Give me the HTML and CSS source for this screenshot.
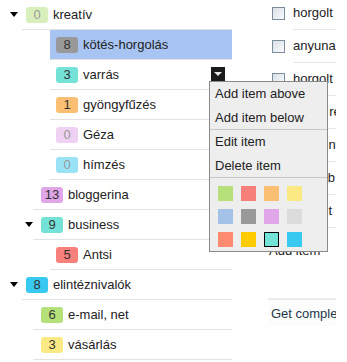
FILE: index.html
```html
<!DOCTYPE html>
<html>
<head>
<meta charset="utf-8">
<link rel="stylesheet" href="styles.css">
</head>
<body>
<div class="page">
  <div class="tree">
    <div class="row l0">
      <span class="gutter"><span class="caret"></span></span>
      <div class="body"><span class="badge green zero">0</span><span class="label">kreatív</span></div>
    </div>
    <div class="row l2">
      <span class="gutter"></span>
      <div class="body selected"><span class="badge gray">8</span><span class="label">kötés-horgolás</span></div>
    </div>
    <div class="row l2">
      <span class="gutter"></span>
      <div class="body"><span class="badge teal">3</span><span class="label">varrás</span><span class="menubtn"></span></div>
    </div>
    <div class="row l2">
      <span class="gutter"></span>
      <div class="body"><span class="badge orange">1</span><span class="label">gyöngyfűzés</span></div>
    </div>
    <div class="row l2">
      <span class="gutter"></span>
      <div class="body"><span class="badge lavender zero">0</span><span class="label">Géza</span></div>
    </div>
    <div class="row l2">
      <span class="gutter"></span>
      <div class="body"><span class="badge cyan zero">0</span><span class="label">hímzés</span></div>
    </div>
    <div class="row l1">
      <span class="gutter"></span>
      <div class="body"><span class="badge lavender">13</span><span class="label">bloggerina</span></div>
    </div>
    <div class="row l1">
      <span class="gutter"><span class="caret"></span></span>
      <div class="body"><span class="badge teal">9</span><span class="label">business</span></div>
    </div>
    <div class="row l2">
      <span class="gutter"></span>
      <div class="body"><span class="badge salmon">5</span><span class="label">Antsi</span></div>
    </div>
    <div class="row l0">
      <span class="gutter"><span class="caret"></span></span>
      <div class="body"><span class="badge cyan">8</span><span class="label">elintéznivalók</span></div>
    </div>
    <div class="row l1">
      <span class="gutter"></span>
      <div class="body"><span class="badge green">6</span><span class="label">e-mail, net</span></div>
    </div>
    <div class="row l1">
      <span class="gutter"></span>
      <div class="body"><span class="badge yellow">3</span><span class="label">vásárlás</span></div>
    </div>
  </div>

  <div class="tasks">
    <div class="task"><span class="check"></span><span class="task-text">horgolt</span></div>
    <div class="task"><span class="check"></span><span class="task-text">anyuna</span></div>
    <div class="task"><span class="check"></span><span class="task-text">horgolt</span></div>
    <div class="task"><span class="check"></span><span class="task-text">cérna rendelés</span></div>
    <div class="task"><span class="check"></span><span class="task-text">minta nyak</span></div>
    <div class="task"><span class="check"></span><span class="task-text">táska b</span></div>
    <div class="task"><span class="check"></span><span class="task-text">kabát t</span></div>
    <div class="add-item">Add item</div>
    <div class="get-complete">Get completed</div>
  </div>

  <div class="menu">
    <div class="menu-item">Add item above</div>
    <div class="menu-item">Add item below</div>
    <div class="menu-sep"></div>
    <div class="menu-item">Edit item</div>
    <div class="menu-item">Delete item</div>
    <div class="menu-sep"></div>
    <div class="swatches">
      <span class="sw green"></span><span class="sw salmon"></span><span class="sw orange"></span><span class="sw yellow"></span>
      <span class="sw blue"></span><span class="sw gray"></span><span class="sw lavender"></span><span class="sw lightgray"></span>
      <span class="sw coral"></span><span class="sw gold"></span><span class="sw teal chosen"></span><span class="sw cyan"></span>
    </div>
  </div>
</div>
</body>
</html>
```

FILE: styles.css
```css
html, body {
  margin: 0;
  padding: 0;
  background: #fff;
}
body {
  font-family: "Liberation Sans", Arial, sans-serif;
  font-size: 13px;
  color: #222;
}
.page {
  position: relative;
  display: flex;
  width: 347px;
  height: 362px;
  overflow: hidden;
}

/* tree */
.tree {
  flex: none;
  width: 232px;
}
.row {
  display: flex;
  height: 30px;
}
.gutter {
  flex: none;
  display: flex;
  align-items: center;
  justify-content: flex-end;
}
.l0 .gutter { width: 22px; }
.l1 .gutter { width: 33px; }
.l2 .gutter { width: 50px; }
.caret {
  width: 0;
  height: 0;
  border-left: 4.5px solid transparent;
  border-right: 4.5px solid transparent;
  border-top: 5px solid #000;
  margin-bottom: 2px;
}
.l0 .caret { margin-right: 4px; }
.l1 .caret { margin-right: 0; }
.body {
  flex: 1;
  display: flex;
  align-items: center;
  border-bottom: 1px solid #e2e2e2;
}
.l0 .body { padding-left: 4px; }
.l1 .body { padding-left: 8px; }
.l2 .body { padding-left: 6px; }
.body.selected { background: #a8c4f3; }

.badge {
  flex: none;
  width: 22px;
  height: 16px;
  line-height: 16px;
  border-radius: 3px;
  text-align: center;
  color: #333;
  margin-right: 5px;
}
.badge.zero { opacity: 0.5; }
.label { white-space: nowrap; }
.menubtn {
  flex: none;
  margin-left: auto;
  margin-right: 7px;
  margin-bottom: 2px;
  width: 14px;
  height: 14px;
  background: #1b1b1b;
  display: flex;
  align-items: center;
  justify-content: center;
}
.menubtn::after {
  content: "";
  width: 0;
  height: 0;
  border-left: 4px solid transparent;
  border-right: 4px solid transparent;
  border-top: 4px solid #e8e8e8;
}

/* colours */
.green { background: #b5e07a; }
.gray { background: #999; }
.teal { background: #74e2d6; }
.orange { background: #fbbf74; }
.lavender { background: #e0a6e8; }
.cyan { background: #38c9f0; }
.salmon { background: #f7807b; }
.yellow { background: #fbe983; }
.blue { background: #a4c2e7; }
.lightgray { background: #dcdcdc; }
.coral { background: #ff8a70; }
.gold { background: #ffcc00; }

/* tasks */
.tasks {
  flex: none;
  width: 68px;
  margin-left: 36px;
  margin-top: -3px;
  overflow: hidden;
}
.task {
  display: flex;
  align-items: center;
  padding-left: 4px;
}
.check {
  flex: none;
  width: 11px;
  height: 11px;
  border: 1px solid #7b8c9c;
  background: linear-gradient(135deg, #d8dfe6, #fbfcfd);
  margin-right: 8px;
}
.task-text {
  flex: 1;
  height: 32px;
  line-height: 32px;
  border-bottom: 1px solid #e6e6e6;
  white-space: nowrap;
}
.add-item {
  padding-left: 1px;
  height: 70px;
  line-height: 46px;
  white-space: nowrap;
}
.get-complete {
  border-top: 2px solid #ececec;
  padding-left: 3px;
  height: 26px;
  line-height: 28px;
  color: #24394a;
  background: #fbfcfb;
  white-space: nowrap;
}

/* menu */
.menu {
  position: absolute;
  left: 209px;
  top: 81px;
  width: 117px;
  background: #eeeeee;
  border: 1px solid #8a8a8a;
  padding-bottom: 4px;
}
.menu-item {
  height: 24px;
  line-height: 24px;
  padding-left: 5px;
  white-space: nowrap;
}
.menu-sep {
  height: 0;
  border-top: 1px solid #c8c8c8;
  margin-top: -1px;
}
.swatches {
  display: grid;
  grid-template-columns: repeat(4, 15px);
  grid-auto-rows: 15px;
  gap: 8px;
  padding: 8px 0 0 8px;
}
.sw {
  display: block;
}
.sw.chosen {
  border: 1px solid #000;
}
```
